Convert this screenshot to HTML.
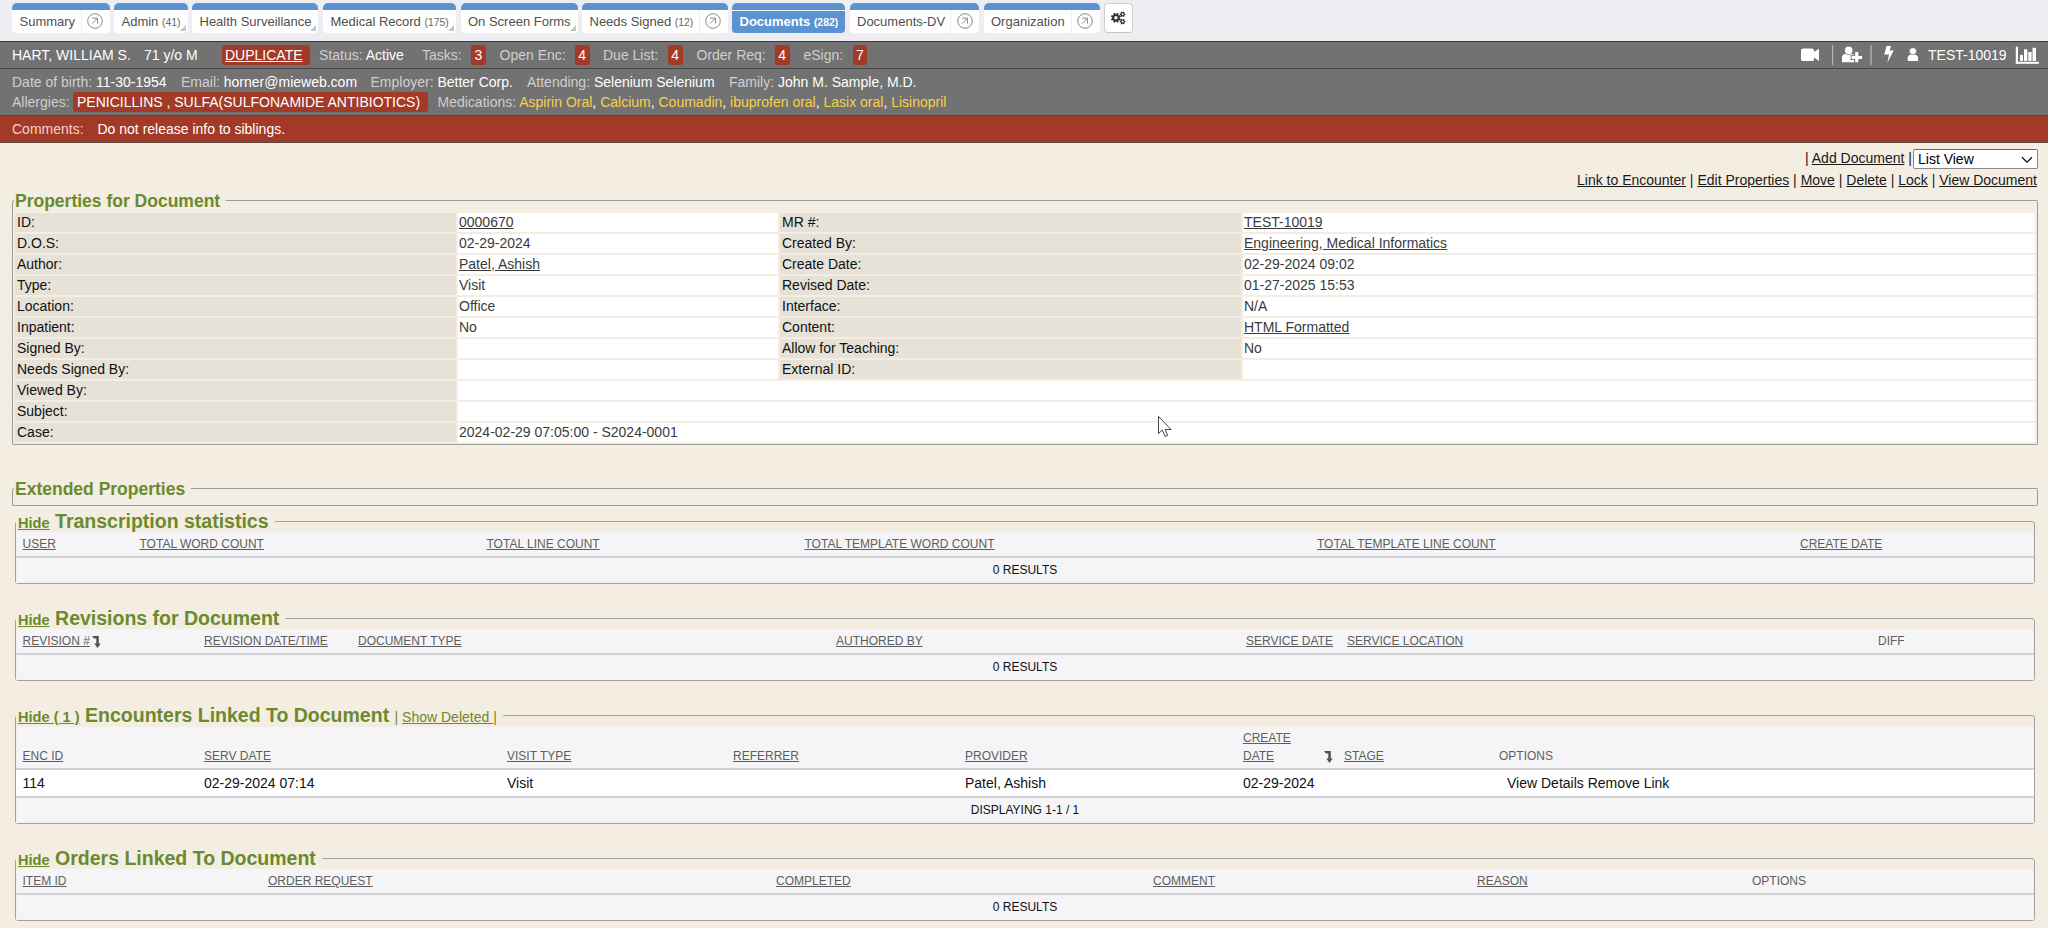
<!DOCTYPE html>
<html><head><meta charset="utf-8">
<style>
*{box-sizing:border-box;}
html,body{margin:0;padding:0;}
body{width:2048px;height:928px;overflow:hidden;position:relative;background:#f4ede1;font-family:"Liberation Sans",sans-serif;font-size:14px;color:#222;}
.abs{position:absolute;}
/* tabs */
#tabbar{position:absolute;left:0;top:0;width:2048px;height:41px;background:#eeedf2;}
.tab{position:absolute;top:3px;height:30px;background:#fff;border-top:7px solid #5b93d1;border-radius:5px 5px 4px 4px;font-size:13px;color:#505050;white-space:nowrap;}
.tab .t{position:absolute;top:4px;line-height:15px;}
.tab .c{font-size:10.4px;color:#666;}
.tab.act .c{color:#fff;}
.tab .dv{position:absolute;top:0;bottom:0;width:1px;background:#eeeeee;}
.tab .ci{position:absolute;top:3px;width:16px;height:16px;}
.tab .tri{position:absolute;right:2px;bottom:2px;width:0;height:0;border-left:6px solid transparent;border-bottom:6px solid #c4c4c4;}
.tab.act{background:#5b93d1;color:#fff;font-weight:bold;}
.tab.act:before{content:"";position:absolute;left:0;right:0;top:0;height:1px;background:#fff;}
#gear{position:absolute;left:1104px;top:3px;width:28.5px;height:30px;background:#fff;border:1px solid #cfcfd4;border-bottom-color:#c4c4c9;border-radius:4px;}
/* header */
#hdr{position:absolute;left:0;top:41px;width:2048px;height:28px;background:#727272;border-top:1px solid #3c3c3c;border-bottom:1px solid #444;color:#fff;}
#hdr .l{position:absolute;top:4.5px;line-height:16px;white-space:nowrap;}
.lbl{color:#cfcfcf;}
.badge{position:absolute;top:3px;height:20px;background:#a33a27;border-radius:3px;color:#fff;text-align:center;line-height:20px;}
#demo{position:absolute;left:0;top:69px;width:2048px;height:46px;background:#727272;color:#fff;}
#demo .l{position:absolute;line-height:16px;white-space:nowrap;}
.med{color:#f6d14a;}
#cmt{position:absolute;left:0;top:115px;width:2048px;height:28px;background:#a33a27;border-top:1px solid #4a4a4a;border-bottom:1px solid #5c4640;color:#fff;}
#cmt .l{position:absolute;top:5px;line-height:16px;white-space:nowrap;}

a{color:inherit;}
.act2{position:absolute;white-space:nowrap;color:#1a1a1a;line-height:16px;}
.act2 a{text-decoration:underline;}
#sel{position:absolute;left:1913px;top:149px;width:124.5px;height:19.5px;background:#fff;border:1px solid #888;border-top-color:#6a6a6a;border-radius:2px;color:#000;}
fieldset.fs{position:absolute;margin:0;padding:0;border:2px groove ThreeDFace;border-radius:3px;min-width:0;}
fieldset.fs legend{padding:0 6px 0 1px;margin:0;color:#6b8a2d;font-weight:bold;white-space:nowrap;}
table.pt{border-collapse:separate;border-spacing:2px;position:absolute;left:0;top:0;table-layout:fixed;}
table.pt td{height:19px;padding:0 0 2px 1px;line-height:16px;font-size:14px;vertical-align:middle;white-space:nowrap;}
table.pt td.k{background:#e6e2d7;color:#111;padding-left:2px;}
table.pt td.v{background:#fff;color:#3b3b3b;}
table.pt td.v a{color:#3b3b3b;text-decoration:underline;}
.gt{position:absolute;background:#f5f5f7;}
.gt .row{position:absolute;left:0;right:0;}
.gt .hd{position:absolute;font-size:12px;color:#5e5e5e;white-space:nowrap;line-height:14px;}
.gt .hd.u{text-decoration:underline;}
.hide{font-size:14.6px;text-decoration:underline;line-height:0;}

fieldset.fs2{position:absolute;margin:0;padding:0;border:1px solid #a2a2a2;border-radius:3px;min-width:0;}
fieldset.fs2 legend{padding:0 6px 0 2px;margin:0;color:#6b8a2d;font-weight:bold;white-space:nowrap;font-size:19.5px;line-height:22px;}
.gt .dt{position:absolute;font-size:14px;color:#111;line-height:16px;white-space:nowrap;}
.gt{box-shadow:inset 1px 0 0 #f0f0f0, inset -1px 0 0 #f0f0f0, inset 0 -1px 0 #f0f0f0;}
</style></head>
<body>
<div id="tabbar">
  <div class="tab" style="left:12px;width:97.5px;"><span class="t" style="left:7.5px;">Summary</span><div class="dv" style="left:68.5px;"></div>
    <svg class="ci" style="left:75px;" viewBox="0 0 16 16"><circle cx="8" cy="8" r="7.3" fill="none" stroke="#8a8a8a" stroke-width="1"/><path d="M5.2 10.5 L10.5 5.2 M5.1 5.2 H10.5 V10.5" fill="none" stroke="#888" stroke-width="1"/></svg></div>
  <div class="tab" style="left:114px;width:73.5px;"><span class="t" style="left:7.5px;">Admin <span class="c">(41)</span></span><div class="tri"></div></div>
  <div class="tab" style="left:192px;width:126px;"><span class="t" style="left:7.5px;">Health Surveillance</span><div class="tri"></div></div>
  <div class="tab" style="left:323px;width:132.5px;"><span class="t" style="left:7.5px;">Medical Record <span class="c">(175)</span></span><div class="tri"></div></div>
  <div class="tab" style="left:460.5px;width:117px;"><span class="t" style="left:7.5px;">On Screen Forms</span><div class="tri"></div></div>
  <div class="tab" style="left:582px;width:145.5px;"><span class="t" style="left:7.5px;">Needs Signed <span class="c">(12)</span></span><div class="dv" style="left:116.5px;"></div>
    <svg class="ci" style="left:122.5px;" viewBox="0 0 16 16"><circle cx="8" cy="8" r="7.3" fill="none" stroke="#8a8a8a" stroke-width="1"/><path d="M5.2 10.5 L10.5 5.2 M5.1 5.2 H10.5 V10.5" fill="none" stroke="#888" stroke-width="1"/></svg></div>
  <div class="tab act" style="left:732px;width:112.5px;"><span class="t" style="left:7.5px;">Documents <span class="c">(282)</span></span></div>
  <div class="tab" style="left:849.5px;width:129px;"><span class="t" style="left:7.5px;">Documents-DV</span><div class="dv" style="left:100.5px;"></div>
    <svg class="ci" style="left:107px;" viewBox="0 0 16 16"><circle cx="8" cy="8" r="7.3" fill="none" stroke="#8a8a8a" stroke-width="1"/><path d="M5.2 10.5 L10.5 5.2 M5.1 5.2 H10.5 V10.5" fill="none" stroke="#888" stroke-width="1"/></svg></div>
  <div class="tab" style="left:983.5px;width:116px;"><span class="t" style="left:7.5px;">Organization</span><div class="dv" style="left:87px;"></div>
    <svg class="ci" style="left:93.5px;" viewBox="0 0 16 16"><circle cx="8" cy="8" r="7.3" fill="none" stroke="#8a8a8a" stroke-width="1"/><path d="M5.2 10.5 L10.5 5.2 M5.1 5.2 H10.5 V10.5" fill="none" stroke="#888" stroke-width="1"/></svg></div>
  <div id="gear"><svg style="position:absolute;left:-1px;top:-1px;" width="30" height="32" viewBox="1104 3 30 32"><path fill="#333" fill-rule="evenodd" d="M1119.67 18.28 L1120.88 18.91 L1120.21 20.53 L1118.90 20.13 L1118.23 20.80 L1118.63 22.11 L1117.01 22.78 L1116.38 21.57 L1115.42 21.57 L1114.79 22.78 L1113.17 22.11 L1113.57 20.80 L1112.90 20.13 L1111.59 20.53 L1110.92 18.91 L1112.13 18.28 L1112.13 17.32 L1110.92 16.69 L1111.59 15.07 L1112.90 15.47 L1113.57 14.80 L1113.17 13.49 L1114.79 12.82 L1115.42 14.03 L1116.38 14.03 L1117.01 12.82 L1118.63 13.49 L1118.23 14.80 L1118.90 15.47 L1120.21 15.07 L1120.88 16.69 L1119.67 17.32 Z M1114.20 17.80 a1.70 1.70 0 1 0 3.40 0 a1.70 1.70 0 1 0 -3.40 0 Z M1124.57 13.57 L1125.42 13.64 L1125.42 14.96 L1124.57 15.03 L1124.22 15.64 L1124.59 16.41 L1123.44 17.08 L1122.95 16.37 L1122.25 16.37 L1121.76 17.08 L1120.61 16.41 L1120.98 15.64 L1120.63 15.03 L1119.78 14.96 L1119.78 13.64 L1120.63 13.57 L1120.98 12.96 L1120.61 12.19 L1121.76 11.52 L1122.25 12.23 L1122.95 12.23 L1123.44 11.52 L1124.59 12.19 L1124.22 12.96 Z M1121.60 14.30 a1.00 1.00 0 1 0 2.00 0 a1.00 1.00 0 1 0 -2.00 0 Z M1124.57 20.87 L1125.42 20.94 L1125.42 22.26 L1124.57 22.33 L1124.22 22.94 L1124.59 23.71 L1123.44 24.38 L1122.95 23.67 L1122.25 23.67 L1121.76 24.38 L1120.61 23.71 L1120.98 22.94 L1120.63 22.33 L1119.78 22.26 L1119.78 20.94 L1120.63 20.87 L1120.98 20.26 L1120.61 19.49 L1121.76 18.82 L1122.25 19.53 L1122.95 19.53 L1123.44 18.82 L1124.59 19.49 L1124.22 20.26 Z M1121.60 21.60 a1.00 1.00 0 1 0 2.00 0 a1.00 1.00 0 1 0 -2.00 0 Z"/></svg></div>
</div>

<div id="hdr">
  <span class="l" style="left:12px;">HART, WILLIAM S.</span>
  <span class="l" style="left:144px;">71 y/o M</span>
  <div class="badge" style="left:222px;width:88px;text-align:left;padding-left:3px;"><span style="text-decoration:underline;">DUPLICATE</span></div>
  <span class="l" style="left:319px;"><span class="lbl">Status:</span> Active</span>
  <span class="l" style="left:422px;" ><span class="lbl">Tasks:</span></span>
  <div class="badge" style="left:471px;width:15px;">3</div>
  <span class="l" style="left:499.5px;"><span class="lbl">Open Enc:</span></span>
  <div class="badge" style="left:575px;width:14.5px;">4</div>
  <span class="l" style="left:603px;"><span class="lbl">Due List:</span></span>
  <div class="badge" style="left:668px;width:14.5px;">4</div>
  <span class="l" style="left:696.5px;"><span class="lbl">Order Req:</span></span>
  <div class="badge" style="left:775px;width:14.5px;">4</div>
  <span class="l" style="left:803.5px;"><span class="lbl">eSign:</span></span>
  <div class="badge" style="left:853px;width:14px;">7</div>
  <span class="l" style="left:1928px;">TEST-10019</span>
  <svg class="abs" style="left:1795px;top:-2px;" width="253" height="30" viewBox="1795 40 253 30">
    <rect x="1801" y="48.4" width="13" height="12.7" rx="2.2" fill="#fff"/>
    <path d="M1813.5 52.3 L1819 48.8 V61 L1813.5 57.3 Z" fill="#fff"/>
    <rect x="1832" y="45" width="1.2" height="20" fill="#b4b4b4"/>
    <path d="M1842 62.3 V57.5 Q1842 53.9 1845.5 53.9 H1851.8 Q1853.5 53.9 1854.3 55 V62.3 Z" fill="#fff"/>
    <circle cx="1848.7" cy="50.4" r="4.1" fill="#fff" stroke="#727272" stroke-width="0.7"/>
    <path d="M1850.6 55 H1861.9 V59.9 H1858.8 V63.2 H1854.3 V59.9 H1850.6 Z" fill="#727272"/>
    <rect x="1855.2" y="52" width="3.1" height="10.3" fill="#fff"/>
    <rect x="1851.6" y="55.9" width="10.4" height="3.1" fill="#fff"/>
    <rect x="1870.3" y="45" width="1.5" height="20" fill="#aaaaaa"/>
    <path d="M1886.6 46 L1891 46 L1889.6 50.5 L1893.8 50.3 L1887.4 62.8 L1889 54.5 L1884.2 54.5 Z" fill="#fff"/>
    <path d="M1907.6 60.9 V58.5 Q1907.6 54.7 1911 54.7 H1914.7 Q1918.1 54.7 1918.1 58.5 V60.9 Z" fill="#fff"/>
    <circle cx="1912.9" cy="51.2" r="3.5" fill="#fff" stroke="#727272" stroke-width="0.6"/>
    <rect x="2015.8" y="46.7" width="2.2" height="17.1" fill="#fff"/>
    <rect x="2015.8" y="61.8" width="23" height="2" fill="#fff"/>
    <rect x="2020" y="54.9" width="3" height="6" fill="#fff"/>
    <rect x="2024" y="49.3" width="3.3" height="11.6" fill="#fff"/>
    <rect x="2028.3" y="52" width="3.3" height="8.9" fill="#fff"/>
    <rect x="2032.5" y="47.8" width="3.5" height="13.1" fill="#fff"/>
  </svg>

</div>

<div id="demo">
  <span class="l" style="left:12px;top:5px;"><span class="lbl">Date of birth:</span> 11-30-1954</span>
  <span class="l" style="left:181px;top:5px;"><span class="lbl">Email:</span> horner@mieweb.com</span>
  <span class="l" style="left:370.5px;top:5px;"><span class="lbl">Employer:</span> Better Corp.</span>
  <span class="l" style="left:527px;top:5px;"><span class="lbl">Attending:</span> Selenium Selenium</span>
  <span class="l" style="left:729px;top:5px;"><span class="lbl">Family:</span> John M. Sample, M.D.</span>
  <span class="l" style="left:12px;top:25px;"><span class="lbl">Allergies:</span></span>
  <div class="badge" style="left:73px;top:22.5px;width:355px;height:20px;line-height:20px;text-align:left;padding-left:4px;">PENICILLINS , SULFA(SULFONAMIDE ANTIBIOTICS)</div>
  <span class="l" style="left:437.5px;top:25px;"><span class="lbl">Medications:</span> <span class="med">Aspirin Oral</span>, <span class="med">Calcium</span>, <span class="med">Coumadin</span>, <span class="med">ibuprofen oral</span>, <span class="med">Lasix oral</span>, <span class="med">Lisinopril</span></span>
</div>

<div id="cmt">
  <span class="l" style="left:12px;"><span style="color:#f0d2ca;">Comments:</span></span>
  <span class="l" style="left:97.5px;">Do not release info to siblings.</span>
</div>


<div class="act2" style="left:1805px;top:150px;">| <a>Add Document</a> |</div>
<div id="sel"><span style="position:absolute;left:4px;top:1px;font-size:14px;line-height:16px;">List View</span>
<svg style="position:absolute;left:106.5px;top:5.5px;" width="12" height="8" viewBox="0 0 12 8"><path d="M1 1.2 L6 6.2 L11 1.2" fill="none" stroke="#111" stroke-width="1.3"/></svg></div>
<div class="act2" style="left:1577px;top:172px;"><a>Link to Encounter</a> | <a>Edit Properties</a> | <a>Move</a> | <a>Delete</a> | <a>Lock</a> | <a>View Document</a></div>

<fieldset class="fs" style="left:12px;top:191px;width:2027px;height:255px;">
<legend style="font-size:17.5px;line-height:20px;">Properties for Document</legend>
<div style="position:relative;">
<table class="pt" style="left:-1px;top:0px;width:2024px;">
<colgroup><col style="width:441px"><col style="width:320px"><col style="width:461px"><col style="width:792px"></colgroup>
<tr><td class="k">ID:</td><td class="v"><a>0000670</a></td><td class="k">MR #:</td><td class="v"><a>TEST-10019</a></td></tr>
<tr><td class="k">D.O.S:</td><td class="v">02-29-2024</td><td class="k">Created By:</td><td class="v"><a>Engineering, Medical Informatics</a></td></tr>
<tr><td class="k">Author:</td><td class="v"><a>Patel, Ashish</a></td><td class="k">Create Date:</td><td class="v">02-29-2024 09:02</td></tr>
<tr><td class="k">Type:</td><td class="v">Visit</td><td class="k">Revised Date:</td><td class="v">01-27-2025 15:53</td></tr>
<tr><td class="k">Location:</td><td class="v">Office</td><td class="k">Interface:</td><td class="v">N/A</td></tr>
<tr><td class="k">Inpatient:</td><td class="v">No</td><td class="k">Content:</td><td class="v"><a>HTML Formatted</a></td></tr>
<tr><td class="k">Signed By:</td><td class="v"></td><td class="k">Allow for Teaching:</td><td class="v">No</td></tr>
<tr><td class="k">Needs Signed By:</td><td class="v"></td><td class="k">External ID:</td><td class="v"></td></tr>
<tr><td class="k">Viewed By:</td><td class="v" colspan="3"></td></tr>
<tr><td class="k">Subject:</td><td class="v" colspan="3"></td></tr>
<tr><td class="k">Case:</td><td class="v" colspan="3">2024-02-29 07:05:00 - S2024-0001</td></tr>
</table></div>
</fieldset>

<fieldset class="fs" style="left:12px;top:479px;width:2027px;height:28px;">
<legend style="font-size:17.5px;line-height:20px;">Extended Properties</legend>
</fieldset>

<!-- Transcription -->
<fieldset class="fs2" style="left:15px;top:510px;width:2020px;height:74px;">
<legend><a class="hide">Hide</a> Transcription statistics</legend>
</fieldset>
<div class="gt" style="left:16px;top:532px;width:2018px;height:51px;">
  <div class="row" style="top:24px;height:2px;background:#d2d2d4;"></div>
  <span class="hd u" style="left:6.5px;top:4.8px;">USER</span>
  <span class="hd u" style="left:123.5px;top:4.8px;">TOTAL WORD COUNT</span>
  <span class="hd u" style="left:470.5px;top:4.8px;">TOTAL LINE COUNT</span>
  <span class="hd u" style="left:788.5px;top:4.8px;">TOTAL TEMPLATE WORD COUNT</span>
  <span class="hd u" style="left:1301px;top:4.8px;">TOTAL TEMPLATE LINE COUNT</span>
  <span class="hd u" style="left:1784px;top:4.8px;">CREATE DATE</span>
  <span class="hd" style="left:0;width:2018px;text-align:center;top:30.6px;color:#111;">0 RESULTS</span>
</div>
<fieldset class="fs2" style="left:15px;top:607px;width:2020px;height:74px;">
<legend><a class="hide">Hide</a> Revisions for Document</legend>
</fieldset>
<div class="gt" style="left:16px;top:629px;width:2018px;height:51px;">
  <div class="row" style="top:24px;height:2px;background:#d2d2d4;"></div>
  <span class="hd u" style="left:6.5px;top:4.8px;">REVISION #</span>
<svg style="position:absolute;left:75px;top:6px;" width="11" height="14" viewBox="0 0 11 14"><path d="M1.2 1.1 L7.8 1.1 L7.8 8.6 L9.7 8.6 L6.5 13 L3.3 8.6 L5.3 8.6 L5.3 3.4 L2.9 3.4 Z" fill="#505050"/></svg>  <span class="hd u" style="left:188px;top:4.8px;">REVISION DATE/TIME</span>
  <span class="hd u" style="left:342px;top:4.8px;">DOCUMENT TYPE</span>
  <span class="hd u" style="left:820px;top:4.8px;">AUTHORED BY</span>
  <span class="hd u" style="left:1230px;top:4.8px;">SERVICE DATE</span>
  <span class="hd u" style="left:1331px;top:4.8px;">SERVICE LOCATION</span>
  <span class="hd" style="left:1862px;top:4.8px;">DIFF</span>
  <span class="hd" style="left:0;width:2018px;text-align:center;top:30.6px;color:#111;">0 RESULTS</span>
</div>
<fieldset class="fs2" style="left:15px;top:704px;width:2020px;height:120px;">
<legend><a class="hide">Hide ( 1 )</a> Encounters Linked To Document <span style="font-size:14px;font-weight:normal;line-height:0;">| <a style="text-decoration:underline;">Show Deleted </a>|</span></legend>
</fieldset>
<div class="gt" style="left:16px;top:727px;width:2018px;height:96px;">
  <div class="row" style="top:41px;height:2px;background:#d2d2d4;"></div>
  <div class="row" style="top:43px;height:26px;background:#fff;"></div>
  <div class="row" style="top:69px;height:2px;background:#d2d2d4;"></div>
  <span class="hd u" style="left:6.5px;top:21.7px;">ENC ID</span>
  <span class="hd u" style="left:188px;top:21.7px;">SERV DATE</span>
  <span class="hd u" style="left:491px;top:21.7px;">VISIT TYPE</span>
  <span class="hd u" style="left:717px;top:21.7px;">REFERRER</span>
  <span class="hd u" style="left:949px;top:21.7px;">PROVIDER</span>
  <span class="hd u" style="left:1227px;top:3.8px;">CREATE</span>
  <span class="hd u" style="left:1227px;top:21.7px;">DATE</span>
<svg style="position:absolute;left:1307px;top:23px;" width="11" height="14" viewBox="0 0 11 14"><path d="M1.2 1.1 L7.8 1.1 L7.8 8.6 L9.7 8.6 L6.5 13 L3.3 8.6 L5.3 8.6 L5.3 3.4 L2.9 3.4 Z" fill="#505050"/></svg>  <span class="hd u" style="left:1328px;top:21.7px;">STAGE</span>
  <span class="hd" style="left:1483px;top:21.7px;">OPTIONS</span>
  <span class="dt" style="left:6.5px;top:48px;">114</span>
  <span class="dt" style="left:188px;top:48px;">02-29-2024 07:14</span>
  <span class="dt" style="left:491px;top:48px;">Visit</span>
  <span class="dt" style="left:949px;top:48px;">Patel, Ashish</span>
  <span class="dt" style="left:1227px;top:48px;">02-29-2024</span>
  <span class="dt" style="left:1491px;top:48px;">View Details Remove Link</span>
  <span class="hd" style="left:0;width:2018px;text-align:center;top:75.5px;color:#111;">DISPLAYING 1-1 / 1</span>
</div>
<fieldset class="fs2" style="left:15px;top:847px;width:2020px;height:74px;">
<legend><a class="hide">Hide</a> Orders Linked To Document</legend>
</fieldset>
<div class="gt" style="left:16px;top:869px;width:2018px;height:51px;">
  <div class="row" style="top:24px;height:2px;background:#d2d2d4;"></div>
  <span class="hd u" style="left:6.5px;top:4.8px;">ITEM ID</span>
  <span class="hd u" style="left:252px;top:4.8px;">ORDER REQUEST</span>
  <span class="hd u" style="left:760px;top:4.8px;">COMPLETED</span>
  <span class="hd u" style="left:1137px;top:4.8px;">COMMENT</span>
  <span class="hd u" style="left:1461px;top:4.8px;">REASON</span>
  <span class="hd" style="left:1736px;top:4.8px;">OPTIONS</span>
  <span class="hd" style="left:0;width:2018px;text-align:center;top:30.6px;color:#111;">0 RESULTS</span>
</div>
<svg class="abs" style="left:1150px;top:410px;" width="30" height="30" viewBox="1150 410 30 30"><path d="M1158.5 416.5 L1158.5 433.5 L1162.3 430 L1165.2 436.5 L1167.6 435.4 L1165.2 429.5 L1171 429.5 Z" fill="#fff" stroke="#222" stroke-width="0.85" stroke-linejoin="miter"/></svg>
</body></html>
